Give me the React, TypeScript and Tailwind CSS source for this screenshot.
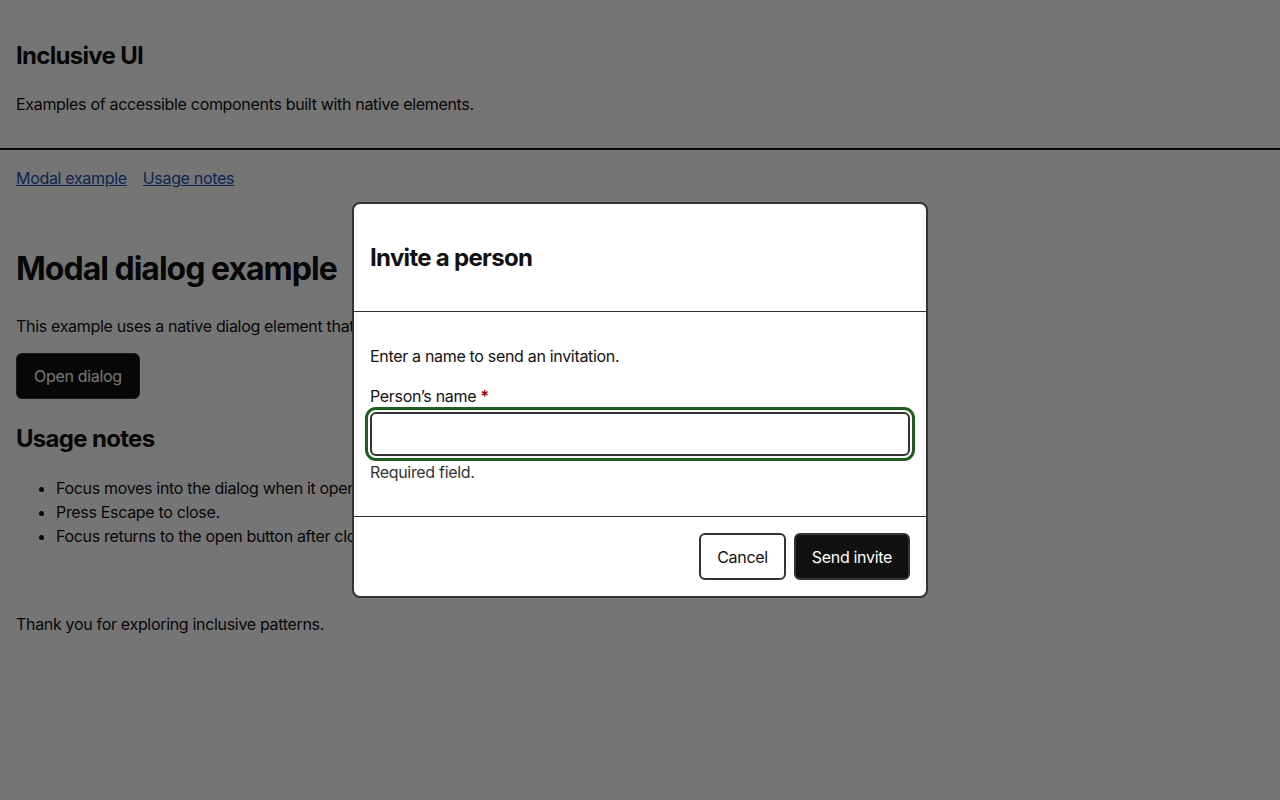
export default function App() {
    return (
        <div className="relative min-h-[800px] bg-white text-[#111] font-['Inter',sans-serif] text-base tracking-[-0.02em]">
            <header className="px-4 pt-[41px] pb-8 border-b-2 border-[#111]">
                <h1 className="text-2xl leading-[30px] font-bold tracking-[-0.029em]">Inclusive UI</h1>
                <p className="mt-[21px] leading-6">Examples of accessible components built with native elements.</p>
            </header>

            <nav aria-label="Sections" className="px-4 pt-4">
                <ul className="flex gap-4 leading-6">
                    <li><a href="#modal" className="underline text-[#1d4fb8]">Modal example</a></li>
                    <li><a href="#notes" className="underline text-[#1d4fb8]">Usage notes</a></li>
                </ul>
            </nav>

            <main className="px-4">
                <h2 id="modal" className="mt-[59px] text-[32px] leading-10 font-bold tracking-[-0.031em]">Modal dialog example</h2>
                <p className="mt-[25px] leading-6">
                    This example uses a native dialog element that traps focus and restores it when the dialog closes.
                </p>
                <button className="mt-[15px] h-[46px] px-[17px] rounded-md bg-[#111] border border-[#333] text-white">
                    Open dialog
                </button>

                <h2 id="notes" className="mt-[25px] text-2xl leading-[30px] font-bold tracking-[-0.029em]">Usage notes</h2>
                <ul className="mt-[22px] pl-10 list-disc leading-6">
                    <li>Focus moves into the dialog when it opens.</li>
                    <li>Press Escape to close.</li>
                    <li>Focus returns to the open button after closing.</li>
                </ul>
            </main>

            <footer className="px-4 mt-16 leading-6">
                <p>Thank you for exploring inclusive patterns.</p>
            </footer>

            {/* Backdrop */}
            <div className="absolute inset-0 bg-black/[0.54]" />

            {/* Dialog */}
            <div
                role="dialog"
                aria-modal="true"
                aria-labelledby="dlg-title"
                className="absolute left-[352px] top-[202px] w-[576px] bg-white border-2 border-[#333] rounded-lg overflow-hidden"
            >
                <div className="h-[108px] px-4 flex items-center border-b border-[#333]">
                    <h2 id="dlg-title" className="text-2xl leading-[30px] font-bold tracking-[-0.029em]">Invite a person</h2>
                </div>

                <div className="px-4 pt-8 pb-8 border-b border-[#333]">
                    <p className="leading-6">Enter a name to send an invitation.</p>
                    <label htmlFor="name" className="block mt-4 leading-6">
                        Person’s name <span className="text-[#a00] font-bold">*</span>
                    </label>
                    <input
                        id="name"
                        type="text"
                        className="block mt-1 w-full h-[44px] px-3 border-2 border-[#333] rounded-md outline-[3px] outline-solid outline-[#1e5e1e] outline-offset-[2px]"
                    />
                    <p className="mt-1 leading-6 text-[#333]">Required field.</p>
                </div>

                <div className="p-4 flex justify-end gap-2">
                    <button className="h-[47px] px-4 rounded-md bg-white border-2 border-[#333] text-[#111]">Cancel</button>
                    <button className="h-[47px] px-4 rounded-md bg-[#111] border-2 border-[#333] text-white">Send invite</button>
                </div>
            </div>
        </div>
    );
}
